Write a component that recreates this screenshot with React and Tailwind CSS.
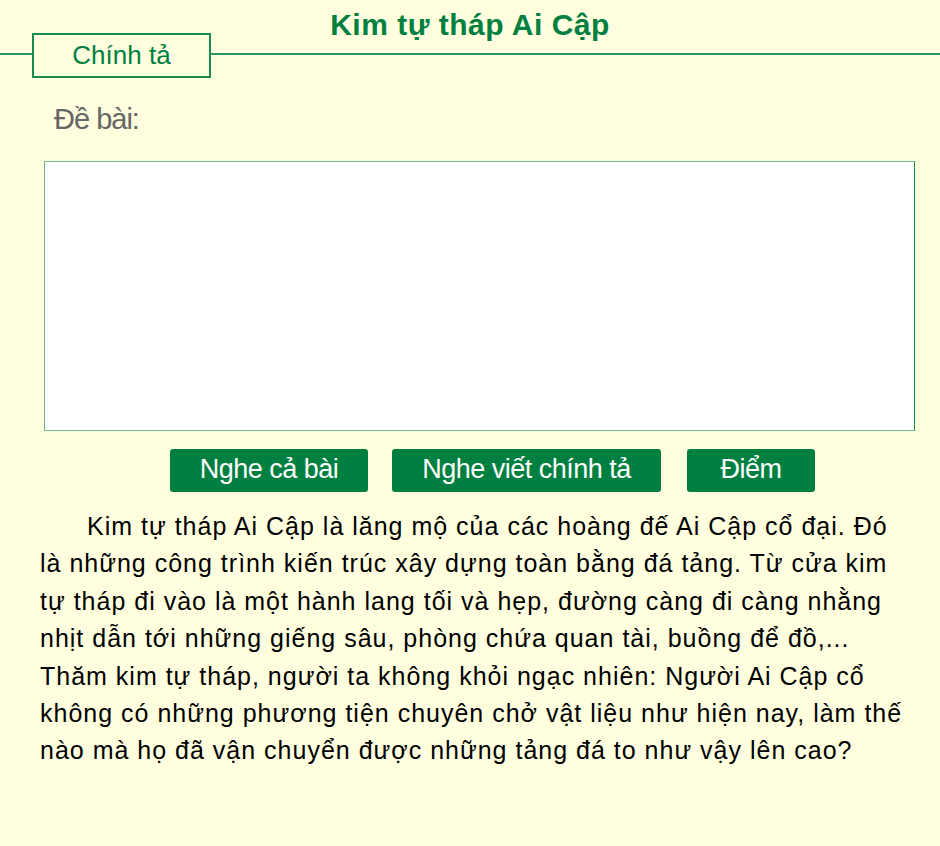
const paragraph =
  "Kim tự tháp Ai Cập là lăng mộ của các hoàng đế Ai Cập cổ đại. Đó là những công trình kiến trúc xây dựng toàn bằng đá tảng. Từ cửa kim tự tháp đi vào là một hành lang tối và hẹp, đường càng đi càng nhằng nhịt dẫn tới những giếng sâu, phòng chứa quan tài, buồng để đồ,... Thăm kim tự tháp, người ta không khỏi ngạc nhiên: Người Ai Cập cổ không có những phương tiện chuyên chở vật liệu như hiện nay, làm thế nào mà họ đã vận chuyển được những tảng đá to như vậy lên cao?";

const App = () => {
  return (
    <div className="min-h-screen w-full bg-[#ffffdf] font-['Liberation_Sans',Arial,sans-serif]">
      {/* header: title sits above the line, tab box straddles it */}
      <div className="grid">
        <h1 className="col-start-1 row-start-1 pt-[8px] text-center text-[30px] leading-[34px] font-bold tracking-[0.5px] text-[#008040]">
          Kim tự tháp Ai Cập
        </h1>
        <div className="col-start-1 row-start-1 mt-[33px] flex items-start">
          <div className="mt-[20px] w-[32px] h-[2px] bg-[#2e9460]" />
          <div className="w-[179px] h-[45px] border-2 border-[#1b8a4e] flex items-center justify-center text-[26px] text-[#008040]">
            Chính tả
          </div>
          <div className="mt-[20px] flex-1 h-[2px] bg-[#2e9460]" />
        </div>
      </div>

      <p className="mt-[24px] ml-[54px] text-[29px] leading-[34px] text-[#666666] tracking-[-1px]">
        Đề bài:
      </p>

      <div className="mt-[25px] ml-[44px] w-[871px] h-[270px] bg-white border border-[#6fbb8d] border-r-[#1a8a4a]" />

      <div className="mt-[18px] ml-[170px] flex">
        <button className="w-[198px] h-[43px] pb-[4px] rounded-[3px] bg-[#008040] text-white text-[27px] leading-[30px] tracking-[-0.5px]">
          Nghe cả bài
        </button>
        <button className="ml-[24px] w-[269px] h-[43px] pb-[4px] rounded-[3px] bg-[#008040] text-white text-[27px] leading-[30px] tracking-[-0.5px]">
          Nghe viết chính tả
        </button>
        <button className="ml-[26px] w-[128px] h-[43px] pb-[4px] rounded-[3px] bg-[#008040] text-white text-[27px] leading-[30px] tracking-[-0.5px]">
          Điểm
        </button>
      </div>

      <p className="mt-[16px] ml-[40px] w-[876px] indent-[47px] text-[25px] leading-[37.4px] tracking-[1px] text-black">
        {paragraph}
      </p>
    </div>
  );
};

export default App;
